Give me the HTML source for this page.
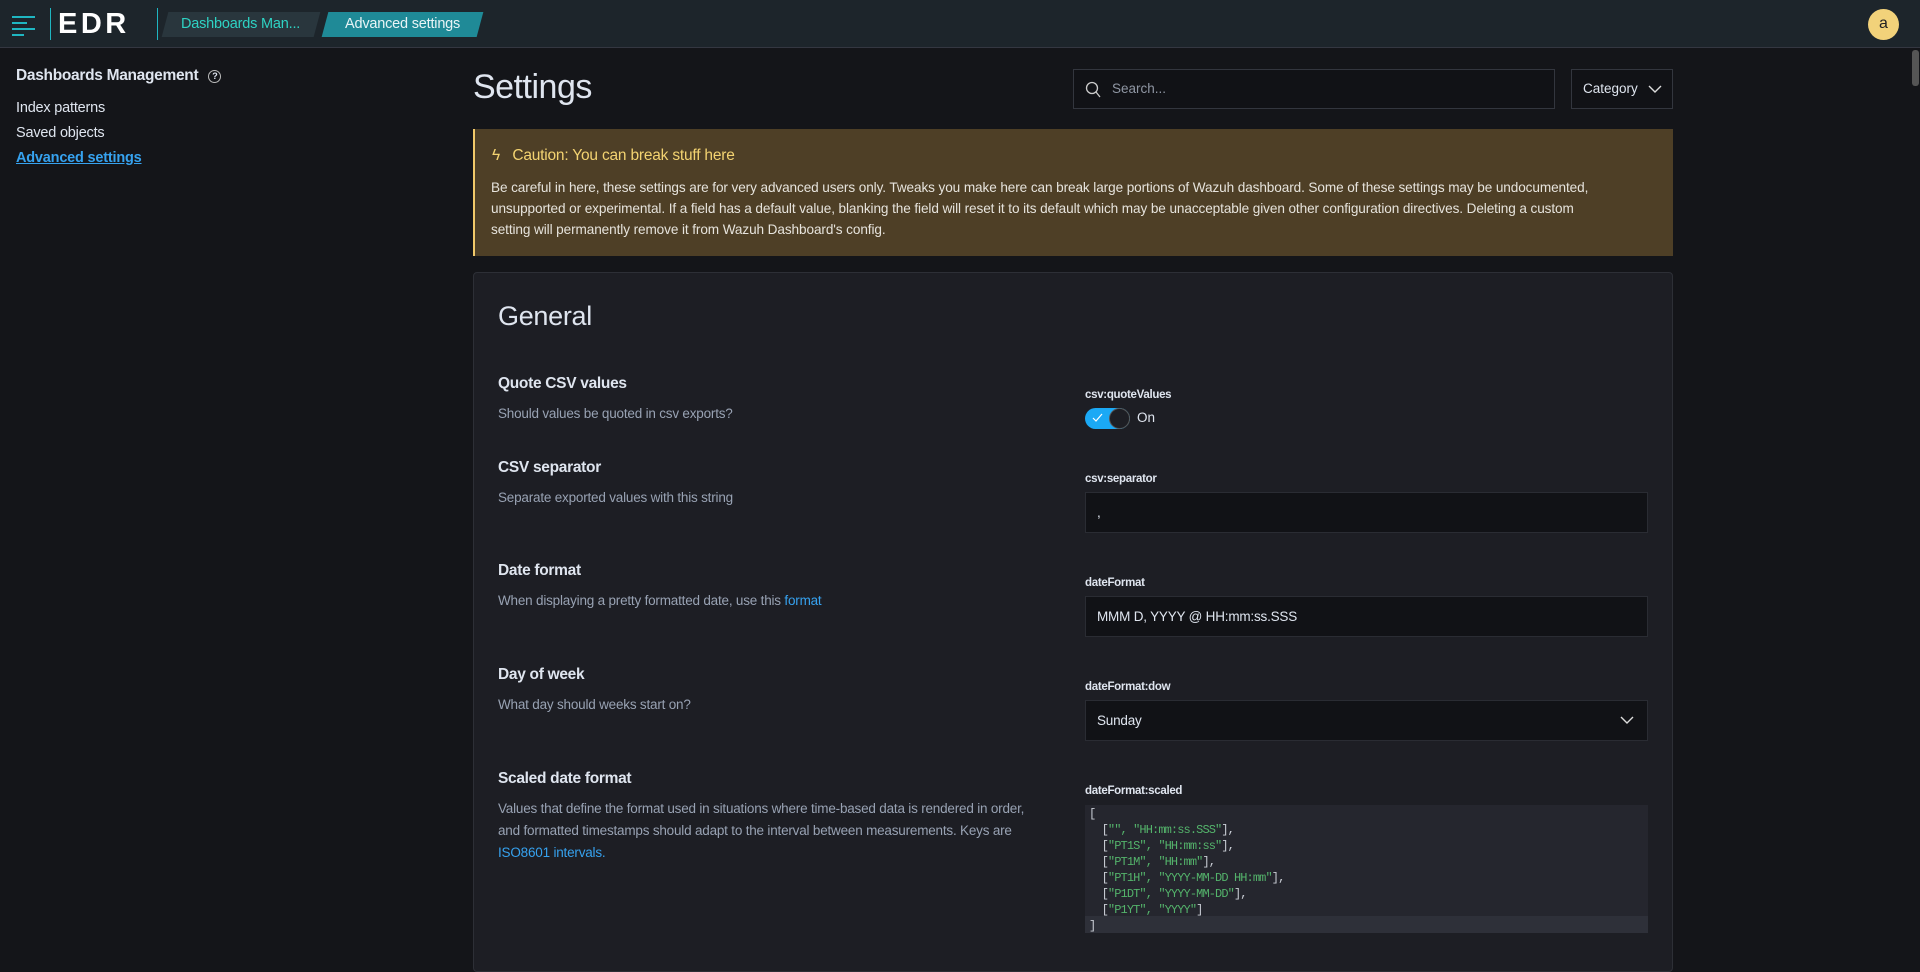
<!DOCTYPE html>
<html><head><meta charset="utf-8"><style>
*{box-sizing:border-box;margin:0;padding:0}
body{width:1920px;height:944px;overflow:hidden;background:#141519;font-family:"Liberation Sans",sans-serif;color:#dfe5ef;position:relative}
.abs{position:absolute}
.hdr{left:0;top:0;width:1920px;height:48px;background:#1d252b;border-bottom:1px solid #343741}
.crumb{height:25px;top:12px;font-size:14.5px;line-height:25px;text-align:center;transform:skewX(-15deg);letter-spacing:-0.2px}
.crumb span{display:inline-block;transform:skewX(15deg)}
.side{left:16px;font-size:14.5px;letter-spacing:-0.2px}
.ttl{font-size:15.5px;font-weight:bold;color:#dfe5ef;letter-spacing:-0.3px}
.desc{font-size:13.5px;color:#98a2b3;line-height:22px;letter-spacing:-0.2px}
.lbl{font-size:11.5px;font-weight:bold;color:#dfe5ef;left:1085px;letter-spacing:-0.3px}
.inp{left:1085px;width:563px;background:#111216;border:1px solid #2a2c33;font-size:13.5px;padding-left:11px;color:#dfe5ef;letter-spacing:-0.2px}
.code{font-family:"Liberation Mono",monospace;font-size:12px;letter-spacing:-0.9px;line-height:16px;color:#54b36b;white-space:pre}
.code b{font-weight:normal;color:#c8ccd4}
</style></head><body>
<div class="abs hdr"></div>
<svg class="abs" style="left:12px;top:15px" width="25" height="22"><g stroke="#1fb6c1" stroke-width="2"><line x1="0" y1="2" x2="23" y2="2"/><line x1="0" y1="8" x2="15" y2="8"/><line x1="0" y1="14" x2="23" y2="14"/><line x1="0" y1="20" x2="12" y2="20"/></g></svg>
<div class="abs" style="left:50px;top:8px;width:1px;height:32px;background:#1fb6c1"></div>
<div class="abs" style="left:58px;top:7px;font-size:29px;font-weight:bold;color:#fff;letter-spacing:3.5px;line-height:34px">EDR</div>
<div class="abs" style="left:157px;top:8px;width:1px;height:32px;background:#1fb6c1"></div>
<div class="abs crumb" style="left:165px;width:152px;background:#29363d;color:#2ed3c4"><span>Dashboards Man...</span></div>
<div class="abs crumb" style="left:325px;width:155px;background:#1f8a97;color:#e8f4f6"><span>Advanced settings</span></div>
<div class="abs" style="left:1868px;top:9px;width:31px;height:31px;border-radius:50%;background:#f2d27a;color:#222;font-size:16px;text-align:center;line-height:29px">a</div>
<div class="abs" style="left:1912px;top:50px;width:7px;height:36px;background:#555;border-radius:3px"></div>

<div class="abs side ttl" style="top:67px">Dashboards Management <span style="display:inline-block;width:13px;height:13px;border:1.3px solid #bbb;border-radius:50%;font-size:9px;text-align:center;line-height:11px;margin-left:6px;vertical-align:1px">?</span></div>
<div class="abs side" style="top:100px">Index patterns</div>
<div class="abs side" style="top:125px">Saved objects</div>
<div class="abs side" style="top:150px;color:#36a2ef;font-weight:bold;text-decoration:underline">Advanced settings</div>

<div class="abs" style="left:473px;top:68px;font-size:34px;color:#dfe5ef;letter-spacing:-0.5px">Settings</div>
<div class="abs" style="left:1073px;top:69px;width:482px;height:40px;background:#111216;border:1px solid #33363e"></div>
<svg class="abs" style="left:1085px;top:81px" width="16" height="17"><circle cx="7" cy="7" r="5.5" fill="none" stroke="#ccc" stroke-width="1.3"/><line x1="11" y1="11" x2="15" y2="16" stroke="#ccc" stroke-width="1.3"/></svg>
<div class="abs" style="left:1112px;top:81px;font-size:13.5px;color:#8f96a3">Search...</div>
<div class="abs" style="left:1571px;top:69px;width:102px;height:40px;background:#111216;border:1px solid #33363e;font-size:13.5px;line-height:38px;padding-left:11px">Category</div>
<svg class="abs" style="left:1648px;top:85px" width="14" height="9"><polyline points="1,1 7,7 13,1" fill="none" stroke="#ddd" stroke-width="1.4"/></svg>

<div class="abs" style="left:473px;top:129px;width:1200px;height:127px;background:#4e3f26;border-left:2px solid #f1c96a"></div>
<div class="abs" style="left:492px;top:147px;font-size:15.5px;color:#f3d371;letter-spacing:-0.2px">ϟ&nbsp;&nbsp; Caution: You can break stuff here</div>
<div class="abs" style="left:491px;top:177px;width:1125px;font-size:13.6px;line-height:21px;color:#e6e3dc;letter-spacing:-0.1px">Be careful in here, these settings are for very advanced users only. Tweaks you make here can break large portions of Wazuh dashboard. Some of these settings may be undocumented, unsupported or experimental. If a field has a default value, blanking the field will reset it to its default which may be unacceptable given other configuration directives. Deleting a custom setting will permanently remove it from Wazuh Dashboard's config.</div>

<div class="abs" style="left:473px;top:272px;width:1200px;height:700px;background:#1d1e24;border:1px solid #2d2f36;border-radius:4px"></div>
<div class="abs" style="left:498px;top:301px;font-size:27px;color:#dfe5ef;letter-spacing:-0.3px">General</div>

<div class="abs ttl" style="left:498px;top:375px">Quote CSV values</div>
<div class="abs desc" style="left:498px;top:403px">Should values be quoted in csv exports?</div>
<div class="abs lbl" style="top:389px">csv:quoteValues</div>
<div class="abs" style="left:1085px;top:408px;width:45px;height:21px;border-radius:11px;background:#1ba9f5"></div>
<svg class="abs" style="left:1092px;top:413px" width="12" height="10"><polyline points="1,5 4,8 10,1" fill="none" stroke="#fff" stroke-width="1.2"/></svg>
<div class="abs" style="left:1109px;top:408px;width:21px;height:21px;border-radius:50%;background:#1d1e24;border:1.5px solid #555"></div>
<div class="abs" style="left:1137px;top:410px;font-size:13.5px">On</div>

<div class="abs ttl" style="left:498px;top:459px">CSV separator</div>
<div class="abs desc" style="left:498px;top:487px">Separate exported values with this string</div>
<div class="abs lbl" style="top:473px">csv:separator</div>
<div class="abs inp" style="top:492px;height:41px;line-height:39px">,</div>

<div class="abs ttl" style="left:498px;top:562px">Date format</div>
<div class="abs desc" style="left:498px;top:590px">When displaying a pretty formatted date, use this <span style="color:#36a2ef">format</span></div>
<div class="abs lbl" style="top:577px">dateFormat</div>
<div class="abs inp" style="top:596px;height:41px;line-height:39px">MMM D, YYYY @ HH:mm:ss.SSS</div>

<div class="abs ttl" style="left:498px;top:666px">Day of week</div>
<div class="abs desc" style="left:498px;top:694px">What day should weeks start on?</div>
<div class="abs lbl" style="top:681px">dateFormat:dow</div>
<div class="abs inp" style="top:700px;height:41px;line-height:39px">Sunday</div>
<svg class="abs" style="left:1620px;top:716px" width="14" height="9"><polyline points="1,1 7,7 13,1" fill="none" stroke="#ddd" stroke-width="1.4"/></svg>

<div class="abs ttl" style="left:498px;top:770px">Scaled date format</div>
<div class="abs desc" style="left:498px;top:798px;width:550px">Values that define the format used in situations where time-based data is rendered in order, and formatted timestamps should adapt to the interval between measurements. Keys are <span style="color:#36a2ef">ISO8601 intervals.</span></div>
<div class="abs lbl" style="top:785px">dateFormat:scaled</div>
<div class="abs" style="left:1085px;top:805px;width:563px;height:128px;background:#25262e"></div>
<div class="abs" style="left:1085px;top:916px;width:563px;height:17px;background:#2e3039"></div>
<div class="abs code" style="left:1089px;top:806px"><b>[</b>
  <b>[</b>"", "HH:mm:ss.SSS"<b>],</b>
  <b>[</b>"PT1S", "HH:mm:ss"<b>],</b>
  <b>[</b>"PT1M", "HH:mm"<b>],</b>
  <b>[</b>"PT1H", "YYYY-MM-DD HH:mm"<b>],</b>
  <b>[</b>"P1DT", "YYYY-MM-DD"<b>],</b>
  <b>[</b>"P1YT", "YYYY"<b>]</b>
<b>]</b></div>
</body></html>
